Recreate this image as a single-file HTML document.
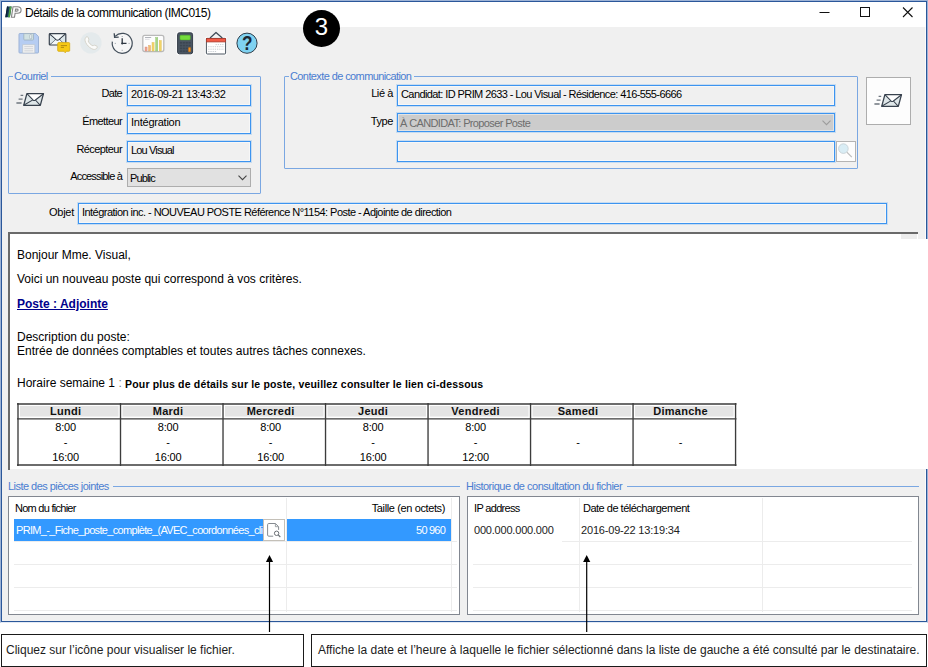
<!DOCTYPE html>
<html lang="fr">
<head>
<meta charset="utf-8">
<title>Détails de la communication (IMC015)</title>
<style>
*{box-sizing:border-box;margin:0;padding:0}
html,body{width:928px;height:667px;overflow:hidden;background:#fff}
body{position:relative;font-family:"Liberation Sans",sans-serif;font-size:11px;color:#000}
.abs{position:absolute}
svg{position:absolute;overflow:visible}
#win{position:absolute;left:0;top:0;width:928px;height:623px;background:#f0f0f0;border:1px solid #9db3d6;border-bottom-color:#e3eaf5;box-shadow:inset 0 0 0 1px #2b579a}
#titlebar{position:absolute;left:2px;top:2px;width:924px;height:25px;background:#fff}
#title{position:absolute;left:25px;top:6px;font-size:12px;line-height:15px;white-space:nowrap;letter-spacing:-0.5px}
.ui{letter-spacing:-0.4px}
.lbl{position:absolute;white-space:nowrap;font-size:11px;line-height:13px;text-align:right;letter-spacing:-0.4px}
.fld{position:absolute;border:1px solid #3c94f0;box-shadow:0 0 0 1px rgba(60,148,240,.22),inset 0 0 0 1px rgba(255,255,255,.45);background:#f0f0f0;font-size:11px;line-height:17px;padding-left:3px;white-space:nowrap;overflow:hidden;letter-spacing:-0.35px}
.grp{position:absolute;border:1px solid #7aa7e2;border-radius:1px}
.grp>span{position:absolute;left:4px;top:-7px;background:#f0f0f0;padding:0 3px 0 1px;color:#4a7dd0;font-size:11px;line-height:13px;white-space:nowrap;letter-spacing:-0.6px}
.sec{position:absolute;color:#4a7dd0;font-size:11px;line-height:13px;white-space:nowrap;letter-spacing:-0.4px}
.hl{position:absolute;height:1px;background:#7aa7e2}
#mail{position:absolute;left:9px;top:233px;width:919px;height:237px;font-size:12px;line-height:14px}
#mail .t{position:absolute;white-space:nowrap;left:8px}
.th{position:absolute;top:405px;width:100px;text-align:center;font-weight:bold;font-size:11px;line-height:12px;letter-spacing:0.25px;white-space:nowrap;color:#111}
.td{position:absolute;width:100px;text-align:center;font-size:11px;line-height:15px;letter-spacing:-0.15px;white-space:nowrap}
.list{position:absolute;background:#fff;border:1px solid #828790}
.list .h{position:absolute;top:5px;font-size:11px;line-height:13px;white-space:nowrap;letter-spacing:-0.4px}
.gl{position:absolute;background:#ececec}
.cap{position:absolute;border:1px solid #1a1a1a;color:#1c1c1c;background:#fff;font-size:12px;line-height:14px;white-space:nowrap;padding:8px 0 0 6px}
</style>
</head>
<body>
<div id="win"></div>
<div id="titlebar"></div>
<div class="abs" style="left:925px;top:27px;width:1px;height:594px;background:#fbfbfb"></div>
<div id="title">Détails de la communication (IMC015)</div>

<!-- app logo -->
<svg style="left:5px;top:6px" width="17" height="12" viewBox="0 0 17 12">
<path d="M2 0.600h4.600l-1.700 10.600h-4.600z" fill="#153a5c"/>
<path d="M4.700 0.600h1.900l-1.700 10.600h-1.900z" fill="#4fa044"/>
<path d="M0.300 11.200l1.700-10.600h1.300l-1.700 10.600z" fill="#0d2033"/>
<path d="M8 0.800h4.500c2.300 0 3.600 1.200 3.600 3.100s-1.400 3.300-3.700 3.300h-2.300l-0.600 4h-3.100z M10.600 3.100l-0.300 2h1.500c0.800 0 1.300-0.400 1.300-1.100 0-0.600-0.400-0.900-1.100-0.900z" fill="#fbfbfb" stroke="#848484" stroke-width="1.100" fill-rule="evenodd"/>
</svg>

<!-- window controls -->
<svg style="left:810px;top:1px" width="116" height="26" viewBox="0 0 116 26">
<path d="M9.5 11.5h10" stroke="#111" stroke-width="1" fill="none"/>
<rect x="50.5" y="6.5" width="9" height="9" stroke="#111" stroke-width="1" fill="none"/>
<path d="M93 6.5l9.5 9.5M102.5 6.5l-9.5 9.5" stroke="#111" stroke-width="1.1" fill="none"/>
</svg>

<!-- badge -->
<div class="abs" style="left:303px;top:10px;width:37px;height:37px;border-radius:50%;background:#000;color:#fff;font-size:24px;line-height:34px;text-align:center">3</div>

<!-- TOOLBAR ICONS -->
<svg style="left:0;top:0" width="270" height="60" viewBox="0 0 270 60">
<!-- save -->
<path d="M19 34.3a0.8 0.8 0 0 1 .8-.8h15.6l3.1 3.1v15.6a0.8 0.8 0 0 1-.8.8h-17.9a0.8 0.8 0 0 1-.8-.8z" fill="#b6cdf2" stroke="#9db3d6" stroke-width="1"/>
<rect x="23.8" y="33.6" width="9.7" height="6.4" rx="0.8" fill="#d2e2e3" stroke="#9db0bd" stroke-width="0.8"/>
<rect x="29.8" y="34.6" width="1.9" height="4.2" rx="0.7" fill="#f6f9f9" stroke="#95a8b2" stroke-width="0.6"/>
<path d="M22.6 44.6h12.2v8.4h-12.2z" fill="#f1f1f1" stroke="#b9c3d0" stroke-width="0.7"/>
<path d="M24.3 46.6h8.8M24.3 48.7h8.8M24.3 50.8h8.8" stroke="#c9cdd2" stroke-width="0.8"/>
<!-- mail + bubble -->
<rect x="49.3" y="33.6" width="16.5" height="11.4" rx="0.8" fill="#f4f8f9" stroke="#38424e" stroke-width="1.2"/>
<path d="M49.6 34l6.4 5.6q1.5 1.2 3 0l6.4-5.6M49.6 44.6l6-5.4M65.5 44.6l-6-5.4" fill="none" stroke="#38424e" stroke-width="1.1"/>
<path d="M50.2 35.6l5 4.2-5 4.3zM65 35.6l-5 4.2 5 4.3z" fill="#dbe6ea"/>
<path d="M58.6 42.6h10.2a0.9 0.9 0 0 1 .9.9v6.9a0.9 0.9 0 0 1-.9.9h-2.5l-1.1 1.5-1.1-1.5h-5.5a0.9 0.9 0 0 1-.9-.9v-6.9a0.9 0.9 0 0 1 .9-.9z" fill="#f6c915" stroke="#d3a70f" stroke-width="0.8"/>
<path d="M60.8 45.6h6.2M60.8 47.4h3.2" stroke="#b58c10" stroke-width="1"/>
<!-- phone -->
<circle cx="90.9" cy="42.9" r="10.7" fill="#e4eaec"/>
<path d="M85.9 37.3c1-0.9 2-0.6 2.4 0.4l0.5 1.6c0.2 0.7-0.2 1.2-0.7 1.6 1 2.4 2.6 4 5 5 0.5-0.6 1-0.9 1.7-0.6l1.6 0.6c0.9 0.4 1.2 1.3 0.4 2.3-1.2 1.4-3 1.6-5.1 0.5-2.800-1.5-4.800-3.600-6.100-6.400-0.9-2-0.700-3.900 0.300-5z" fill="#fbfbfa" stroke="#cfcdc2" stroke-width="0.8"/>
<!-- history clock -->
<circle cx="122.2" cy="43.4" r="9.400" fill="#f6f6f6"/><path d="M115.1 36.3A10 10 0 1 1 112.35 41.7" fill="none" stroke="#434f5b" stroke-width="1.2"/>
<path d="M114.2 33.2l0.400 4.200 4.100-0.200" fill="none" stroke="#3f4a56" stroke-width="1.300"/>
<path d="M122.2 38.300v5.100h4.300" fill="none" stroke="#2d3640" stroke-width="1.300"/>
<circle cx="122.2" cy="43.4" r="1" fill="#2d3640"/>
<path d="M122.200 36v1M122.200 49.800v1M114.800 43.400h1M128.600 43.400h1" stroke="#8b949c" stroke-width="0.9"/>
<!-- chart -->
<rect x="142.800" y="35.400" width="21" height="16.200" rx="2" fill="#fdfdfd" stroke="#b9b9b9" stroke-width="1.300"/>
<path d="M145 37.500h6.200" stroke="#a9adb3" stroke-width="0.9"/><path d="M145 39.300h4.600" stroke="#d5d7da" stroke-width="0.800"/>
<rect x="145" y="47" width="2.100" height="4" fill="#eba392" stroke="#d98a78" stroke-width="0.400"/>
<rect x="148.500" y="45.400" width="2.100" height="5.600" fill="#f3bb76" stroke="#dfa660" stroke-width="0.400"/>
<rect x="152" y="42.500" width="2.100" height="8.500" fill="#f2d468" stroke="#dcbc50" stroke-width="0.400"/>
<rect x="155.600" y="37.500" width="2.200" height="13.500" fill="#a6d586" stroke="#8fc070" stroke-width="0.400"/>
<rect x="159.200" y="40.500" width="2.100" height="10.500" fill="#f2d468" stroke="#dcbc50" stroke-width="0.400"/>
<!-- calculator -->
<rect x="176.300" y="31.600" width="17.500" height="23.400" rx="2.600" fill="#fbfbfb"/>
<rect x="177.600" y="32.800" width="15" height="21" rx="1.800" fill="#4a5562" stroke="#333c47" stroke-width="1"/>
<rect x="180" y="35.200" width="10.300" height="4.700" rx="0.800" fill="#74dc3c" stroke="#4fae27" stroke-width="0.500"/>
<g fill="#3b4652"><rect x="179.800" y="42" width="2.200" height="1.600"/><rect x="182.700" y="42" width="2.200" height="1.600"/><rect x="185.600" y="42" width="2.200" height="1.600"/><rect x="188.500" y="42" width="2.200" height="1.600"/>
<rect x="179.800" y="44.800" width="2.200" height="1.600"/><rect x="182.700" y="44.800" width="2.200" height="1.600"/><rect x="185.600" y="44.800" width="2.200" height="1.600"/><rect x="188.500" y="44.800" width="2.200" height="1.600"/>
<rect x="179.800" y="47.600" width="2.200" height="1.600"/><rect x="182.700" y="47.600" width="2.200" height="1.600"/><rect x="185.600" y="47.600" width="2.200" height="1.600"/>
<rect x="179.800" y="50.400" width="2.200" height="1.600"/><rect x="182.700" y="50.400" width="2.200" height="1.600"/><rect x="185.600" y="50.400" width="2.200" height="1.600"/></g>
<rect x="188.500" y="47.400" width="2.100" height="4.400" rx="0.500" fill="#f7941d" stroke="#c96f0c" stroke-width="0.400"/>
<!-- calendar -->
<rect x="204.800" y="36.800" width="22.200" height="18.600" rx="1.500" fill="#fafafa"/>
<path d="M210 38l6-5.500 6.300 5.500" fill="none" stroke="#3f4a56" stroke-width="1.200" stroke-linejoin="round"/>
<rect x="206.400" y="38.400" width="19.200" height="15.600" rx="1" fill="#ffffff" stroke="#4a5560" stroke-width="1"/>
<rect x="206.400" y="38.400" width="19.200" height="3.500" fill="#f25a46" stroke="#a5382a" stroke-width="0.800"/>
<g stroke="#c3c8ce" stroke-width="0.900" stroke-dasharray="1.300 0.900"><path d="M215.600 44.600h8.600"/><path d="M208.200 46.700h16"/><path d="M208.200 49.200h16"/><path d="M208.200 51.500h8.600"/></g>
<!-- help -->
<circle cx="247" cy="43.200" r="10.900" fill="#f8f8f8"/>
<circle cx="247" cy="43.200" r="10.100" fill="#7fd2f1" stroke="#2b3946" stroke-width="1"/>
<text transform="translate(247.3 50.3) scale(0.88 1)" text-anchor="middle" font-family="Liberation Sans, sans-serif" font-weight="bold" font-size="19.500" fill="#1c2733">?</text>
</svg>

<!-- Courriel group -->
<div class="grp" style="left:8px;top:76px;width:253px;height:118px"><span>Courriel</span></div>
<div class="lbl" style="letter-spacing:-0.7px;left:40px;width:82px;top:87px">Date</div>
<div class="fld" style="letter-spacing:-0.4px;left:127px;top:85px;width:124px;height:21px">2016-09-21 13:43:32</div>
<div class="lbl" style="letter-spacing:-0.61px;left:40px;width:82px;top:115px">Émetteur</div>
<div class="fld" style="letter-spacing:-0.24px;left:127px;top:113px;width:124px;height:21px">Intégration</div>
<div class="lbl" style="letter-spacing:-0.57px;left:40px;width:82px;top:143px">Récepteur</div>
<div class="fld" style="letter-spacing:-0.85px;left:127px;top:141px;width:124px;height:21px">Lou Visual</div>
<div class="lbl" style="letter-spacing:-0.83px;left:40px;width:82px;top:170px">Accessible à</div>
<div class="fld" style="letter-spacing:-0.85px;left:127px;top:168px;width:124px;height:19px;background:#e1e1e1;border-color:#adadad;box-shadow:none;padding-left:2px;line-height:18px">Public</div>
<svg style="left:238px;top:175px" width="9" height="6" viewBox="0 0 9 6"><path d="M0.5 0.7l4 4 4-4" stroke="#444" stroke-width="1.1" fill="none"/></svg>

<!-- Contexte group -->
<div class="grp" style="left:284px;top:76px;width:574px;height:93px"><span>Contexte de communication</span></div>
<div class="lbl" style="left:330px;width:63px;top:87px">Lié à</div>
<div class="fld" style="letter-spacing:-0.59px;left:397px;top:85px;width:438px;height:21px">Candidat: ID PRIM 2633 - Lou Visual - Résidence: 416-555-6666</div>
<div class="lbl" style="left:330px;width:63px;top:115px">Type</div>
<div class="fld" style="letter-spacing:-0.63px;left:397px;top:113px;width:438px;height:19px;background:#cccccc;color:#6d6d6d;padding-left:2px;line-height:18px">À CANDIDAT: Proposer Poste</div>
<svg style="left:822px;top:120px" width="9" height="6" viewBox="0 0 9 6"><path d="M0.5 0.7l4 4 4-4" stroke="#9c9c9c" stroke-width="1.1" fill="none"/></svg>
<div class="fld" style="left:397px;top:141px;width:438px;height:21px"></div>
<div class="abs" style="left:836px;top:141px;width:20px;height:21px;border:1px solid #b4b4b4;background:#fdfdfd"></div>
<svg style="left:836px;top:141px" width="20" height="21" viewBox="0 0 20 21"><path d="M10.8 11.2l5 5" stroke="#bdbdbd" stroke-width="1.2"/><circle cx="7.4" cy="7.6" r="4.8" fill="#d9edf5" stroke="#c3cdd2" stroke-width="0.8"/></svg>
<div class="abs" style="left:866px;top:77px;width:45px;height:48px;border:1px solid #adadad;background:#fdfdfd"></div>

<svg style="left:16.3px;top:93px" width="30" height="14" viewBox="0 0 30 14">
<path d="M10.900 0.700h16.600l-3.200 11.600h-16.600z" fill="#ffffff" stroke="none"/>
<path d="M10.900 0.700l6.200 6.300-9.400 5.300zM27.500 0.700l-8.300 6.300 5.100 5.300zM7.700 12.300l10.400-5.600 6.200 5.600z" fill="#dfe7e9"/>
<path d="M10.900 0.700h16.600l-3.200 11.600h-16.600z" fill="none" stroke="#38424e" stroke-width="1.300" stroke-linejoin="round"/>
<path d="M10.900 0.700l6.300 6.500q0.900 0.700 1.900 0l8.400-6.500M7.700 12.300l9.200-5.400M24.300 12.300l-4.900-5.300" fill="none" stroke="#38424e" stroke-width="1.100"/>
<path d="M4.600 2.400h2.600M2.600 6.200h4M0.400 10h5.200" stroke="#6d757e" stroke-width="1.300"/>
</svg>
<svg style="left:873.6px;top:93.8px" width="30" height="14" viewBox="0 0 30 14">
<path d="M10.900 0.700h16.600l-3.200 11.600h-16.600z" fill="#ffffff" stroke="none"/>
<path d="M10.900 0.700l6.200 6.300-9.400 5.300zM27.500 0.700l-8.300 6.300 5.100 5.300zM7.700 12.300l10.400-5.600 6.200 5.600z" fill="#dfe7e9"/>
<path d="M10.900 0.700h16.600l-3.200 11.600h-16.600z" fill="none" stroke="#38424e" stroke-width="1.300" stroke-linejoin="round"/>
<path d="M10.900 0.700l6.300 6.500q0.900 0.700 1.900 0l8.400-6.500M7.700 12.300l9.200-5.400M24.300 12.300l-4.900-5.300" fill="none" stroke="#38424e" stroke-width="1.100"/>
<path d="M4.600 2.400h2.600M2.600 6.200h4M0.400 10h5.200" stroke="#6d757e" stroke-width="1.300"/>
</svg>
<!-- Objet -->
<div class="lbl" style="letter-spacing:-0.27px;left:20px;width:54px;top:206px">Objet</div>
<div class="fld" style="letter-spacing:-0.54px;left:78px;top:203px;width:809px;height:21px">Intégration inc. - NOUVEAU POSTE Référence N°1154: Poste - Adjointe de direction</div>

<!-- mail body -->
<div class="abs" style="left:8px;top:232px;width:910px;height:238px;border-top:2px solid #6a6a6a;border-left:2px solid #6a6a6a;background:#fff"></div>
<div class="abs" style="left:901px;top:234px;width:16px;height:5px;background:#ededed"></div>
<div class="abs" style="left:10px;top:239px;width:918px;height:230px;background:#fff"></div>
<div class="abs" style="left:10px;top:469px;width:916px;height:1px;background:#f0f0f0"></div>
<div id="mail">
<div class="t" style="top:15px">Bonjour Mme. Visual,</div>
<div class="t" style="top:39px">Voici un nouveau poste qui correspond à vos critères.</div>
<div class="t" style="top:64px;color:#00008b;font-weight:bold;text-decoration:underline">Poste : Adjointe</div>
<div class="t" style="top:97px">Description du poste:</div>
<div class="t" style="top:111px">Entrée de données comptables et toutes autres tâches connexes.</div>
<div class="t" style="top:143px">Horaire semaine 1 <span style="color:#777">:</span> <b style="font-size:10.5px;letter-spacing:0.17px;position:relative;top:1px">Pour plus de détails sur le poste, veuillez consulter le lien ci-dessous</b></div>
</div>

<!-- schedule table -->
<svg style="left:0;top:0" width="928" height="480" viewBox="0 0 928 480">
<rect x="17" y="403" width="719.6" height="63" fill="#fff"/>
<rect x="20.00" y="406" width="98.51" height="10.6" fill="#e4e4e4"/>
<rect x="122.51" y="406" width="98.51" height="10.6" fill="#e4e4e4"/>
<rect x="225.02" y="406" width="98.51" height="10.6" fill="#e4e4e4"/>
<rect x="327.53" y="406" width="98.51" height="10.6" fill="#e4e4e4"/>
<rect x="430.04" y="406" width="98.51" height="10.6" fill="#e4e4e4"/>
<rect x="532.55" y="406" width="98.51" height="10.6" fill="#e4e4e4"/>
<rect x="635.06" y="406" width="98.51" height="10.6" fill="#e4e4e4"/>
<path d="M18.00 403v63M120.51 403v63M223.02 403v63M325.53 403v63M428.04 403v63M530.55 403v63M633.06 403v63M735.57 403v63M17 404h719.6M17 418.8h719.6M17 465h719.6" stroke="#3c3c3c" stroke-width="1.35" fill="none"/>
</svg>
<div class="th" style="left:15.6px">Lundi</div>
<div class="td" style="left:15.6px;top:420px">8:00<br>-<br>16:00</div>
<div class="th" style="left:118.1px">Mardi</div>
<div class="td" style="left:118.1px;top:420px">8:00<br>-<br>16:00</div>
<div class="th" style="left:220.6px">Mercredi</div>
<div class="td" style="left:220.6px;top:420px">8:00<br>-<br>16:00</div>
<div class="th" style="left:323.1px">Jeudi</div>
<div class="td" style="left:323.1px;top:420px">8:00<br>-<br>16:00</div>
<div class="th" style="left:425.6px">Vendredi</div>
<div class="td" style="left:425.6px;top:420px">8:00<br>-<br>12:00</div>
<div class="th" style="left:528.1px">Samedi</div>
<div class="td" style="left:528.1px;top:435px">-</div>
<div class="th" style="left:630.6px">Dimanche</div>
<div class="td" style="left:630.6px;top:435px">-</div>
<!-- lists -->
<div class="sec" style="letter-spacing:-0.54px;left:8px;top:480px">Liste des pièces jointes</div>
<div class="hl" style="left:113px;top:486px;width:347px"></div>
<div class="sec" style="letter-spacing:-0.49px;left:466px;top:480px">Historique de consultation du fichier</div>
<div class="hl" style="left:627px;top:486px;width:292px"></div>

<div class="list" style="left:8px;top:496px;width:452px;height:119px">
 <div class="h" style="letter-spacing:-0.73px;left:6px">Nom du fichier</div>
 <div class="h" style="letter-spacing:-0.38px;right:14px">Taille (en octets)</div>
 <div class="gl" style="left:277px;top:1px;width:1px;height:114px"></div>
 <div class="gl" style="left:442px;top:1px;width:1px;height:114px"></div>
 <div class="gl" style="left:5px;top:44px;width:443px;height:1px"></div>
 <div class="gl" style="left:5px;top:67px;width:443px;height:1px"></div>
 <div class="gl" style="left:5px;top:90px;width:443px;height:1px"></div>
 <div class="gl" style="left:5px;top:113px;width:443px;height:1px"></div>
 <div class="abs" style="letter-spacing:-0.67px;left:5px;top:22px;width:271px;height:22px;background:#3399ff;color:#fff;font-size:11px;line-height:22px;padding-left:2px;white-space:nowrap;overflow:hidden">PRIM_-_Fiche_poste_complète_(AVEC_coordonnées_client)</div>
 <div class="abs" style="letter-spacing:-0.79px;left:278px;top:22px;width:164px;height:22px;background:#3399ff;color:#fff;font-size:11px;line-height:22px;padding-right:6px;text-align:right;white-space:nowrap">50 960</div>
 <div class="abs" style="left:254px;top:22px;width:22px;height:22px;background:#fff;border:1px solid #c4c0b8"></div>
 <svg style="left:254px;top:22px" width="22" height="22" viewBox="0 0 22 22"><path d="M12.400 4.500h-6.600a1.200 1.200 0 0 0-1.200 1.200v10.300a1.200 1.200 0 0 0 1.200 1.200h4.400M12.400 4.500l3.200 3.200v3.200" fill="none" stroke="#868b91" stroke-width="1"/><path d="M12.400 4.700v3h3" fill="none" stroke="#868b91" stroke-width="0.800"/><circle cx="13.600" cy="14.300" r="2.200" fill="#fff" stroke="#6a6f75" stroke-width="1"/><path d="M15.300 16l2 2" stroke="#6a6f75" stroke-width="1.100"/></svg>
</div>

<div class="list" style="left:467px;top:496px;width:452px;height:119px">
 <div class="h" style="letter-spacing:-0.67px;left:6px">IP address</div>
 <div class="h" style="letter-spacing:-0.5px;left:115px">Date de téléchargement</div>
 <div class="gl" style="left:111px;top:1px;width:1px;height:114px"></div>
 <div class="gl" style="left:294px;top:1px;width:1px;height:114px"></div>
 <div class="gl" style="left:94px;top:44px;width:350px;height:1px"></div>
 <div class="gl" style="left:5px;top:67px;width:439px;height:1px"></div>
 <div class="gl" style="left:5px;top:90px;width:439px;height:1px"></div>
 <div class="gl" style="left:5px;top:113px;width:439px;height:1px"></div>
 <div class="abs" style="left:2px;top:22px;width:92px;height:23px;background:#fff"></div>
 <div class="abs" style="left:112px;top:22px;width:120px;height:22px;background:#fff"></div>
 <div class="abs" style="left:6px;top:26px;font-size:11px;line-height:14px;white-space:nowrap;letter-spacing:-0.2px;color:#222">000.000.000.000</div>
 <div class="abs" style="left:113px;top:26px;font-size:11px;line-height:14px;white-space:nowrap;letter-spacing:-0.18px;color:#222">2016-09-22 13:19:34</div>
</div>

<!-- arrows -->
<svg style="left:0;top:0" width="928" height="667" viewBox="0 0 928 667">
<path d="M269.5 560v72" stroke="#000" stroke-width="1.2"/><path d="M269.5 555l3.6 7h-7.2z" fill="#000"/>
<path d="M586.7 560v72" stroke="#000" stroke-width="1.2"/><path d="M586.7 555l3.6 7h-7.2z" fill="#000"/>
</svg>

<!-- captions -->
<div class="cap" style="left:1px;top:634px;width:303px;height:33px;padding-left:4px">Cliquez sur l’icône pour visualiser le fichier.</div>
<div class="cap" style="left:311px;top:634px;width:616px;height:33px">Affiche la date et l’heure à laquelle le fichier sélectionné dans la liste de gauche a été consulté par le destinataire.</div>
</body>
</html>
